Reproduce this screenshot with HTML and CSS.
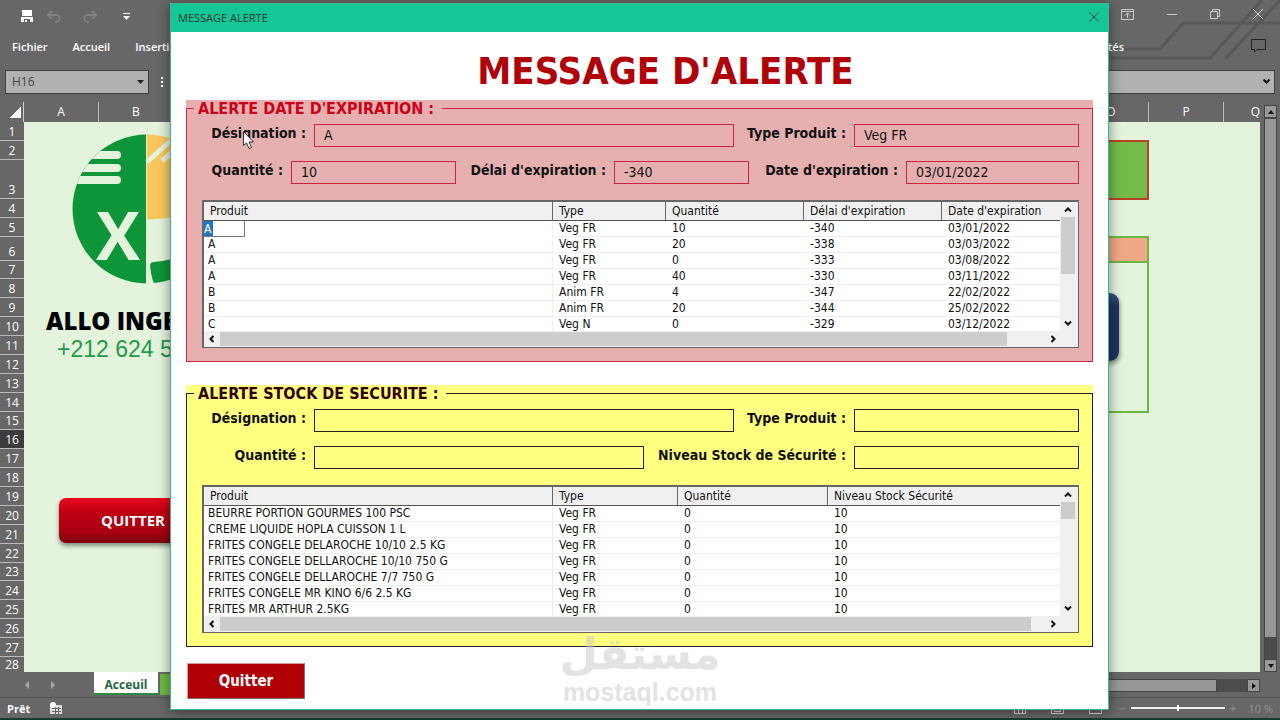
FILE: index.html
```html
<!DOCTYPE html>
<html lang="fr">
<head>
  <meta charset="UTF-8">
  <meta name="viewport" content="width=device-width, initial-scale=1.0">
  <title>Message Alerte</title>
  <link rel="stylesheet" href="styles.css">
</head>
<body>
  <div class="app">
    <header class="ribbon">
      <svg class="circuit" width="340" height="62" viewBox="0 0 340 62" fill="none" stroke="#585858" stroke-width="3">
        <path d="M160 49H220L243 23H340"/>
        <path d="M160 58H270L322 0"/>
        <path d="M285 59L340 0"/>
      </svg>
      <div class="title-row">
        <div class="quick">
          <button type="button" aria-label="Enregistrer"><svg width="12" height="12" viewBox="0 0 12 12"><path d="M1 0H11V6H1ZM0 7H12V12H9V9H3V12H0Z" fill="#fff"/><path d="M4 10H6V12H4Z" fill="#fff"/></svg></button>
          <button type="button" aria-label="Annuler"><svg width="14" height="13" viewBox="0 0 14 13" fill="none" stroke="#808080" stroke-width="2"><path d="M5 1L1 5L5 9M1 5H9C14 5 14 12 8 12"/></svg></button>
          <button type="button" aria-label="Rétablir"><svg width="14" height="13" viewBox="0 0 14 13" fill="none" stroke="#808080" stroke-width="2"><path d="M9 1L13 5L9 9M13 5H5C0 5 0 12 6 12"/></svg></button>
          <button type="button" aria-label="Personnaliser"><svg width="7" height="7" viewBox="0 0 7 7" fill="#fff"><path d="M0 0H7V1H0ZM0 3H7L3.500 7Z"/></svg></button>
        </div>
        <div class="window-buttons">
          <button type="button" aria-label="Ruban"><svg width="13" height="11" viewBox="0 0 13 11" fill="none" stroke="#ccc"><path d="M.5 .5H12.500V10.500H.5ZM.5 2.500H12.500M6.500 9V4M4 6.500L6.500 4L9 6.500"/></svg></button>
          <button type="button" aria-label="Réduire"><svg width="10" height="10" viewBox="0 0 10 10" stroke="#ccc"><path d="M0 5.500H10"/></svg></button>
          <button type="button" aria-label="Restaurer"><svg width="10" height="10" viewBox="0 0 10 10" fill="none" stroke="#ccc"><path d="M.5 2.500H7.500V9.500H.5ZM2.500 2.500V.5H9.500V7.500H7.500"/></svg></button>
          <button type="button" aria-label="Fermer"><svg width="10" height="10" viewBox="0 0 10 10" stroke="#ccc"><path d="M0 0L10 10M10 0L0 10"/></svg></button>
        </div>
      </div>
      <nav class="tabs">
        <a href="#">Fichier</a>
        <a href="#">Accueil</a>
        <a href="#">Insertion</a>
        <a href="#" class="tab-right">Nouveautés</a>
        <button type="button" class="comment" aria-label="Commentaires"><svg width="15" height="14" viewBox="0 0 15 14" fill="none" stroke="#222"><path d="M.5 .5H14.500V10.500H6L3.500 13V10.500H.5Z"/></svg></button>
      </nav>
      <div class="formula-row">
        <div class="name-box">
          <input type="text" value="H16" aria-label="Zone de nom">
          <svg width="7" height="4" viewBox="0 0 7 4"><path d="M0 0H7L3.500 4Z" fill="#222"/></svg>
        </div>
        <svg class="dots" width="2" height="10" viewBox="0 0 2 10" fill="#fff"><path d="M0 0H2V2H0ZM0 4H2V6H0ZM0 8H2V10H0Z"/></svg>
        <div class="formula-box">
          <input type="text" aria-label="Barre de formule">
          <svg width="7" height="5" viewBox="0 0 7 5" fill="none" stroke="#111" stroke-width="2"><path d="M.5 .5L3.500 3.500L6.500 .5"/></svg>
        </div>
      </div>
      <div class="columns">
        <span class="corner"></span>
        <span class="col">A</span>
        <span class="col">B</span>
        <span class="col-gap"></span>
        <span class="col">O</span>
        <span class="col">P</span>
        <span class="col last">Q</span>
      </div>
    </header>

    <main class="workbook">
      <div class="row-numbers">
        <span>1</span><span>2</span><span class="row-tall">3</span><span>4</span><span>5</span><span class="row-mid">6</span><span>7</span><span>8</span><span>9</span><span>10</span><span>11</span><span>12</span><span>13</span><span>14</span><span>15</span><span class="current">16</span><span>17</span><span>18</span><span>19</span><span>20</span><span>21</span><span>22</span><span>23</span><span>24</span><span>25</span><span>26</span><span>27</span><span class="row-cut">28</span>
      </div>
      <div class="canvas">
        <div class="brand">
          <svg width="150" height="150" viewBox="0 0 150 150">
            <defs>
              <clipPath id="round"><circle cx="75" cy="75" r="74.500"/></clipPath>
            </defs>
            <g clip-path="url(#round)">
              <path d="M0 0H74V150H0Z" fill="#0f9539"/>
              <path d="M75 0H150V60Q112 87 75 85Z" fill="#fbc75d"/>
              <path d="M82 128Q110 126 130 110L150 150H83Q80 148 78 132Q78 128 82 128Z" fill="#0f9539"/>
              <path d="M75 28L104 2M90 27L112 8" stroke="#e3f3dc" stroke-width="5"/>
              <path d="M0 17H45a4 4 0 0 1 0 8H0ZM0 30H45a4 4 0 0 1 0 8H0ZM0 42H45a4 4 0 0 1 0 8H0Z" fill="#e3f3dc"/>
            </g>
            <text x="24" y="126" class="brand-x">X</text>
          </svg>
          <strong>ALLO INGE</strong>
          <span>+212 624 5</span>
        </div>
        <button type="button" class="sheet-quit">QUITTER</button>
        <div class="green-box"></div>
        <div class="panel-box"></div>
        <div class="navy-box"></div>
      </div>
      <div class="v-scroll">
        <button type="button" aria-label="Haut"><svg width="6" height="4" viewBox="0 0 6 4"><path d="M0 4H6L3 0Z" fill="#111"/></svg></button>
        <div class="v-track"><i></i></div>
        <button type="button" aria-label="Bas"><svg width="6" height="4" viewBox="0 0 6 4"><path d="M0 0H6L3 4Z" fill="#111"/></svg></button>
      </div>
    </main>

    <div class="sheet-tabs">
      <svg class="tab-arrows" width="30" height="8" viewBox="0 0 30 8" fill="#aaa"><path d="M4 0V8L0 4ZM26 0V8L30 4Z"/></svg>
      <a href="#" class="sheet-tab">Acceuil</a>
      <a href="#" class="sheet-tab-next" aria-label="Feuille suivante"></a>
      <div class="h-scroll"><i></i></div>
      <button type="button" class="h-next" aria-label="Droite"><svg width="4" height="6" viewBox="0 0 4 6"><path d="M0 0V6L4 3Z" fill="#111"/></svg></button>
    </div>
    <footer class="status">
      <span>Prêt</span>
      <svg class="macro" width="12" height="12" viewBox="0 0 12 12"><path d="M0 3H12V12H0Z" fill="#ddd"/><path d="M2 6.500H11M2 9.500H11M5.500 5V12M8.500 5V12" stroke="#666"/><circle cx="3" cy="3" r="3" fill="#fff"/></svg>
      <div class="views">
        <svg width="12" height="11" viewBox="0 0 12 11" fill="none" stroke="#ddd"><path d="M.5 .5H11.500V10.500H.5ZM.5 5.500H11.500M4.500 0V11M8.500 0V11"/></svg>
        <svg width="13" height="11" viewBox="0 0 13 11" fill="none" stroke="#ddd"><path d="M.5 .5H12.500V10.500H.5ZM3.500 3.500H9.500V8.500H3.500Z"/></svg>
        <svg width="13" height="11" viewBox="0 0 13 11" fill="none" stroke="#ddd"><path d="M.5 .5H12.500V10.500H.5ZM.5 3.500H12.500"/></svg>
      </div>
      <div class="zoom">
        <span>−</span>
        <input type="range" min="0" max="100" value="50" aria-label="Zoom">
        <span>+</span>
      </div>
      <span class="percent">10 %</span>
    </footer>
  </div>

  <div class="overlay">
    <div class="dialog" role="dialog" aria-labelledby="dialogTitle">
      <div class="dialog-bar">
        <span>MESSAGE ALERTE</span>
        <button type="button" aria-label="Fermer"><svg width="10" height="10" viewBox="0 0 10 10" stroke="#164a3c"><path d="M0 0L10 10M10 0L0 10"/></svg></button>
      </div>
      <h1 id="dialogTitle">MESSAGE D'ALERTE</h1>

      <section class="alert red">
        <fieldset>
          <legend>ALERTE DATE D'EXPIRATION :</legend>
          <div class="fields two">
            <label for="expName">Désignation :</label>
            <input type="text" id="expName" value="A">
            <label for="expType">Type Produit :</label>
            <input type="text" id="expType" value="Veg FR">
          </div>
          <div class="fields three">
            <label for="expQty">Quantité :</label>
            <input type="text" id="expQty" value="10">
            <label for="expDelay">Délai d'expiration :</label>
            <input type="text" id="expDelay" value="-340">
            <label for="expDate">Date d'expiration :</label>
            <input type="text" id="expDate" value="03/01/2022">
          </div>
          <div class="list">
            <div class="list-view">
              <table>
                <colgroup><col class="w-name"><col class="w-type"><col class="w-qty"><col class="w-delay"><col></colgroup>
                <thead>
                  <tr><th>Produit</th><th>Type</th><th>Quantité</th><th>Délai d'expiration</th><th>Date d'expiration</th></tr>
                </thead>
                <tbody>
                  <tr><td class="editing"><input type="text" value="A" aria-label="Produit"></td><td>Veg FR</td><td>10</td><td>-340</td><td>03/01/2022</td></tr>
                  <tr><td>A</td><td>Veg FR</td><td>20</td><td>-338</td><td>03/03/2022</td></tr>
                  <tr><td>A</td><td>Veg FR</td><td>0</td><td>-333</td><td>03/08/2022</td></tr>
                  <tr><td>A</td><td>Veg FR</td><td>40</td><td>-330</td><td>03/11/2022</td></tr>
                  <tr><td>B</td><td>Anim FR</td><td>4</td><td>-347</td><td>22/02/2022</td></tr>
                  <tr><td>B</td><td>Anim FR</td><td>20</td><td>-344</td><td>25/02/2022</td></tr>
                  <tr><td>C</td><td>Veg N</td><td>0</td><td>-329</td><td>03/12/2022</td></tr>
                </tbody>
              </table>
            </div>
            <div class="bar-v">
              <svg width="8" height="5" viewBox="0 0 8 5"><path d="M1 4.500L4 1.500L7 4.500"/></svg>
              <i class="long"></i>
              <svg width="8" height="5" viewBox="0 0 8 5"><path d="M1 .5L4 3.500L7 .5"/></svg>
            </div>
            <div class="bar-h">
              <svg width="5" height="8" viewBox="0 0 5 8"><path d="M4.500 1L1.500 4L4.500 7"/></svg>
              <div><i class="first"></i></div>
              <svg width="5" height="8" viewBox="0 0 5 8"><path d="M.5 1L3.500 4L.5 7"/></svg>
            </div>
          </div>
        </fieldset>
      </section>

      <section class="alert yellow">
        <fieldset>
          <legend>ALERTE STOCK DE SECURITE :</legend>
          <div class="fields two">
            <label for="stockName">Désignation :</label>
            <input type="text" id="stockName">
            <label for="stockType">Type Produit :</label>
            <input type="text" id="stockType">
          </div>
          <div class="fields level">
            <label for="stockQty">Quantité :</label>
            <input type="text" id="stockQty">
            <label for="stockLevel">Niveau Stock de Sécurité :</label>
            <input type="text" id="stockLevel">
          </div>
          <div class="list">
            <div class="list-view">
              <table>
                <colgroup><col class="w-name"><col class="w-type2"><col class="w-qty2"><col></colgroup>
                <thead>
                  <tr><th>Produit</th><th>Type</th><th>Quantité</th><th>Niveau Stock Sécurité</th></tr>
                </thead>
                <tbody>
                  <tr><td>BEURRE PORTION GOURMES 100 PSC</td><td>Veg FR</td><td>0</td><td>10</td></tr>
                  <tr><td>CREME LIQUIDE HOPLA CUISSON 1 L</td><td>Veg FR</td><td>0</td><td>10</td></tr>
                  <tr><td>FRITES CONGELE DELAROCHE 10/10 2.5 KG</td><td>Veg FR</td><td>0</td><td>10</td></tr>
                  <tr><td>FRITES CONGELE DELLAROCHE 10/10 750 G</td><td>Veg FR</td><td>0</td><td>10</td></tr>
                  <tr><td>FRITES CONGELE DELLAROCHE 7/7 750 G</td><td>Veg FR</td><td>0</td><td>10</td></tr>
                  <tr><td>FRITES CONGELE MR KINO 6/6 2.5 KG</td><td>Veg FR</td><td>0</td><td>10</td></tr>
                  <tr><td>FRITES MR ARTHUR 2.5KG</td><td>Veg FR</td><td>0</td><td>10</td></tr>
                </tbody>
              </table>
            </div>
            <div class="bar-v">
              <svg width="8" height="5" viewBox="0 0 8 5"><path d="M1 4.500L4 1.500L7 4.500"/></svg>
              <i class="short"></i>
              <svg width="8" height="5" viewBox="0 0 8 5"><path d="M1 .5L4 3.500L7 .5"/></svg>
            </div>
            <div class="bar-h">
              <svg width="5" height="8" viewBox="0 0 5 8"><path d="M4.500 1L1.500 4L4.500 7"/></svg>
              <div><i class="second"></i></div>
              <svg width="5" height="8" viewBox="0 0 5 8"><path d="M.5 1L3.500 4L.5 7"/></svg>
            </div>
          </div>
        </fieldset>
      </section>

      <button type="button" class="quit">Quitter</button>
    </div>
  </div>

  <div class="watermark">
    <span class="wm-ar" lang="ar" dir="rtl">مستقل</span>
    <span class="wm-lat">mostaql.com</span>
  </div>
  <svg class="cursor" width="12" height="19" viewBox="0 0 12 19"><path d="M.5 .5V14.500L3.500 12L6 17.500L8.500 16.500L6 11H10.500Z" fill="#fff" stroke="#333"/></svg>
</body>
</html>
```
FILE: styles.css
```css
* {
  box-sizing: border-box;
}
body {
  margin: 0;
  height: 100vh;
  overflow: hidden;
  font-family: "Open Sans", "Noto Sans", sans-serif;
  font-size: 12px;
  color: #fff;
}
button {
  padding: 0;
  border: none;
  background: none;
  display: flex;
  align-items: center;
  justify-content: center;
}
a {
  color: inherit;
  text-decoration: none;
}
input {
  font: inherit;
  color: inherit;
  min-width: 0;
}

/* spreadsheet behind the dialog */
.app {
  height: 100vh;
  display: flex;
  flex-direction: column;
  background: #676767;
  border-bottom: 2px solid #153c30;
}
.ribbon {
  position: relative;
}
.circuit {
  position: absolute;
  right: 0;
  top: 0;
}
.title-row, .tabs {
  position: relative;
  display: flex;
  justify-content: space-between;
  align-items: center;
}
.title-row {
  height: 32px;
  padding: 0 17px 4px 21px;
}
.quick {
  display: flex;
  align-items: center;
  padding-top: 4px;
  gap: 22px;
}
.quick button:first-child {
  margin-right: -8px;
}
.quick button:last-child {
  margin-left: 4px;
}
.window-buttons {
  display: flex;
  align-items: center;
  gap: 33px;
}
.tabs {
  height: 28px;
  padding: 0 14px 0 12px;
  gap: 25px;
  justify-content: flex-start;
  font-size: 11px;
  font-weight: 600;
}
.tab-right {
  margin-left: auto;
}
.comment {
  margin-left: 102px;
}
.formula-row {
  display: flex;
  align-items: center;
  height: 23px;
  margin: 10px 5px 9px;
}
.name-box, .formula-box {
  display: flex;
  align-items: center;
  height: 24px;
  background: #b1b1b1;
  border: 1px solid #3f3f3f;
  padding-right: 4px;
}
.name-box {
  width: 144px;
}
.formula-box {
  flex: 1;
}
.name-box input, .formula-box input {
  flex: 1;
  border: none;
  background: none;
  color: #444;
  padding: 0 6px;
}
.dots {
  margin: 0 12px;
}
.columns {
  display: flex;
  height: 20px;
  padding-right: 20px;
}
.corner {
  width: 24px;
  border-right: 1px solid #ccc;
  background: linear-gradient(135deg, transparent 50%, #fff 50%) 9px 4px / 12px 12px no-repeat;
}
.col {
  width: 75px;
  border-right: 1px solid #bbb;
  text-align: center;
  line-height: 20px;
}
.col-gap {
  flex: 1;
}
.col.last {
  width: 36px;
  border: none;
  text-align: right;
  overflow: hidden;
}
.workbook {
  flex: 1;
  min-height: 0;
  display: flex;
}
.row-numbers {
  width: 24px;
  display: flex;
  flex-direction: column;
  overflow: hidden;
}
.row-numbers span {
  flex: 1 1 0;
  min-height: 0;
  display: flex;
  align-items: flex-end;
  justify-content: center;
  line-height: 17px;
  border-bottom: 1px solid #bbb;
}
.row-numbers .row-tall {
  flex: 0 0 39px;
}
.row-numbers .row-mid {
  flex: 0 0 24px;
}
.row-numbers .row-cut {
  flex: 0 0 15px;
  line-height: 15px;
  border: none;
}
.row-numbers .current {
  background: #3c3c3c;
}
.canvas {
  flex: 1;
  position: relative;
  overflow: hidden;
  background: #e3f3dc;
}
.brand {
  position: absolute;
  left: 22px;
  top: 12px;
  display: flex;
  flex-direction: column;
  white-space: nowrap;
}
.brand svg {
  margin-left: 26px;
}
.brand-x {
  font: bold 66px "Open Sans", sans-serif;
  fill: #e3f3dc;
}
.brand strong {
  margin-top: 20px;
  font-size: 24px;
  font-weight: 800;
  line-height: 34px;
  color: #000;
}
.brand span {
  margin-left: 11px;
  font: 23px/22px "Liberation Sans", sans-serif;
  color: #1f9a48;
}
.sheet-quit {
  position: absolute;
  left: 35px;
  top: 376px;
  width: 148px;
  height: 45px;
  padding-bottom: 2px;
  border-radius: 7px;
  background: linear-gradient(#e80a1e, #c00014 30%, #a80010 75%, #7c000a);
  box-shadow: 0 3px 4px rgba(0, 0, 0, 0.4);
  color: #fff;
  font: bold 15px "Open Sans", sans-serif;
}
.green-box {
  position: absolute;
  right: 111px;
  top: 18px;
  width: 90px;
  height: 60px;
  background: #74bb4b;
  border: 2px solid #bb4224;
}
.panel-box {
  position: absolute;
  right: 111px;
  top: 114px;
  width: 90px;
  height: 177px;
  border: 2px solid #6db544;
  background: linear-gradient(#eeaa84 23px, #6db544 23px, #6db544 25px, transparent 25px);
}
.navy-box {
  position: absolute;
  right: 141px;
  top: 171px;
  width: 60px;
  height: 68px;
  border-radius: 9px;
  background: linear-gradient(#3a5288, #1f3261 20%, #1f3261);
  box-shadow: 1px 3px 4px rgba(0, 0, 0, 0.4);
}
.v-scroll {
  width: 20px;
  margin-top: -17px;
  padding: 0 3px 0 4px;
  display: flex;
  flex-direction: column;
}
.v-scroll button, .h-next {
  width: 13px;
  height: 13px;
  background: #999;
  border: 1px solid #444;
}
.v-track {
  flex: 1;
  background: #4c4c4c;
  border: 1px solid #444;
  border-bottom: none;
}
.v-track i {
  display: block;
  height: 96%;
  background: #979797;
}
.sheet-tabs {
  height: 26px;
  display: flex;
  align-items: flex-start;
  border-bottom: 1px solid #555;
}
.tab-arrows {
  margin: 9px 39px 0 25px;
}
.sheet-tab {
  width: 64px;
  height: 23px;
  line-height: 25px;
  text-align: center;
  font-weight: bold;
  color: #27633f;
  background: #fff;
  border-bottom: 2px solid #2a8a45;
}
.sheet-tab-next {
  width: 60px;
  height: 21px;
  margin: 2px 0 0 2px;
  background: #6cbb45;
}
.h-scroll {
  flex: 1;
  height: 13px;
  margin: 7px 0 0 600px;
  background: #4c4c4c;
}
.h-scroll i {
  display: block;
  width: 93%;
  height: 13px;
  background: #979797;
  border: 1px solid #444;
}
.h-next {
  margin: 7px 20px 0 0;
}
.status {
  height: 20px;
  display: flex;
  align-items: center;
  padding: 0 7px;
  font-size: 11px;
  font-weight: bold;
}
.macro {
  margin-left: 20px;
}
.views {
  margin-left: auto;
  display: flex;
  gap: 25px;
}
.zoom {
  display: flex;
  align-items: center;
  gap: 5px;
  margin: 0 12px 0 17px;
  font-size: 12px;
  font-weight: normal;
  color: #909090;
}
.zoom input {
  appearance: none;
  width: 94px;
  height: 2px;
  margin: 0;
  background: #eee;
}
.zoom input::-webkit-slider-thumb {
  appearance: none;
  width: 2px;
  height: 6px;
  background: #fff;
}
.percent {
  font-weight: normal;
  color: #909090;
}

/* dialog */
.overlay {
  position: absolute;
  top: 0;
  left: 0;
  right: 0;
  padding: 3px 171px 3px 170px;
}
.dialog {
  background: #fff;
  border: 1px solid #3fb795;
  padding-bottom: 10px;
  box-shadow: 0 2px 12px rgba(0, 0, 0, 0.45);
  font-family: "DejaVu Sans Condensed", "DejaVu Sans", sans-serif;
  color: #111;
}
.dialog-bar {
  display: flex;
  justify-content: space-between;
  align-items: center;
  height: 28px;
  padding: 0 9px 2px 7px;
  background: #15c796;
  color: #12382e;
  font: 11px "Open Sans", sans-serif;
}
h1 {
  margin: 0;
  padding: 5px 0 0 52px;
  height: 68px;
  line-height: 68px;
  font-size: 38px;
  text-align: center;
  color: #b00208;
}
.alert {
  margin: 0 15px 23px;
}
.red {
  background: #e7b0b0;
}
.yellow {
  background: #ffff80;
  margin-bottom: 16px;
}
fieldset {
  min-width: 0;
  margin: 0;
  padding: 7px 13px 13px 15px;
  border: 1px solid #222;
}
.red fieldset {
  border-color: #cf2440;
}
legend {
  margin-left: -8px;
  padding: 0 8px 0 4px;
  font-size: 16px;
  line-height: 17px;
  font-weight: bold;
  color: #300;
}
.red legend {
  color: #cc0018;
}
.fields {
  display: grid;
  margin-bottom: 14px;
}
.two {
  grid-template-columns: 112px 420fr 120px 225fr;
}
.three {
  grid-template-columns: 89px 165fr 158px 135fr 157px 173fr;
  margin-bottom: 16px;
}
.level {
  grid-template-columns: 112px 330fr 210px 225fr;
  margin-bottom: 16px;
}
.fields label {
  padding-right: 8px;
  text-align: right;
  font-size: 14px;
  line-height: 18px;
  font-weight: bold;
  white-space: nowrap;
}
.fields input {
  height: 23px;
  padding: 0 9px 1px;
  font-size: 14px;
  border: 1px solid #222;
  background: none;
}
.red .fields input {
  border-color: #cf2440;
}
.list {
  display: grid;
  grid-template-columns: 1fr 15px;
  grid-template-rows: 129px 15px;
  padding-right: 3px;
  height: 148px;
  background: #f0f0f0;
  border: 1px solid #666;
  border-width: 2px 1px 1px 2px;
}
.list-view {
  overflow: hidden;
  background: #fff;
}
table {
  width: 100%;
  table-layout: fixed;
  border-collapse: separate;
  border-spacing: 0;
  font-size: 12px;
}
.w-name {
  width: 349px;
}
.w-type {
  width: 113px;
}
.w-qty, .w-delay {
  width: 138px;
}
.w-type2 {
  width: 125px;
}
.w-qty2 {
  width: 150px;
}
th {
  height: 19px;
  padding: 1px 0 0 6px;
  text-align: left;
  font-weight: normal;
  line-height: 17px;
  background: #f0f0f0;
  border-right: 1px solid #666;
  border-bottom: 1px solid #555;
}
th:last-child {
  border-right: none;
}
td {
  height: 16px;
  padding: 0 0 0 6px;
  line-height: 15px;
  white-space: nowrap;
  border-bottom: 1px solid #eee;
}
td:first-child {
  padding-left: 4px;
  border-right: 1px solid #eee;
}
td.editing:first-child {
  padding: 0;
  border-bottom: none;
}
.editing input {
  display: block;
  width: 41px;
  height: 16px;
  padding: 0;
  border: 1px solid #777;
  border-width: 0 1px 1px 0;
  color: #fff;
  background: linear-gradient(90deg, #2277c4 9px, #fff 9px);
}
.bar-v, .bar-h {
  display: flex;
  align-items: center;
}
.bar-v {
  flex-direction: column;
  padding: 5px 0;
}
.bar-h {
  padding: 0 4px 0 5px;
}
.bar-v svg, .bar-h svg {
  flex: none;
  fill: none;
  stroke: #111;
  stroke-width: 2;
}
.bar-v i {
  width: 14px;
  margin: 5px 0 auto;
  background: #cdcdcd;
}
.long {
  height: 57px;
}
.short {
  height: 17px;
}
.bar-h div {
  flex: 1;
  margin: 0 3px 0 6px;
}
.bar-h i {
  display: block;
  height: 14px;
  background: #cdcdcd;
}
.bar-h .first {
  width: 95%;
}
.bar-h .second {
  width: 98%;
}
.quit {
  width: 118px;
  height: 36px;
  margin-left: 16px;
  background: #b00006;
  border: 1px solid #d99;
  border-right-color: #777;
  border-bottom-color: #777;
  color: #fff;
  font: bold 15px "DejaVu Sans Condensed", "DejaVu Sans", sans-serif;
}

.watermark {
  position: absolute;
  left: 0;
  right: 0;
  bottom: 15px;
  display: flex;
  flex-direction: column;
  align-items: center;
  color: #c8c8c8;
  opacity: 0.5;
  pointer-events: none;
}
.wm-ar {
  font: bold 44px/52px "DejaVu Sans", sans-serif;
}
.wm-lat {
  font: bold 25px/25px "Liberation Sans", sans-serif;
}
.cursor {
  position: absolute;
  left: 243px;
  top: 131px;
}
```
